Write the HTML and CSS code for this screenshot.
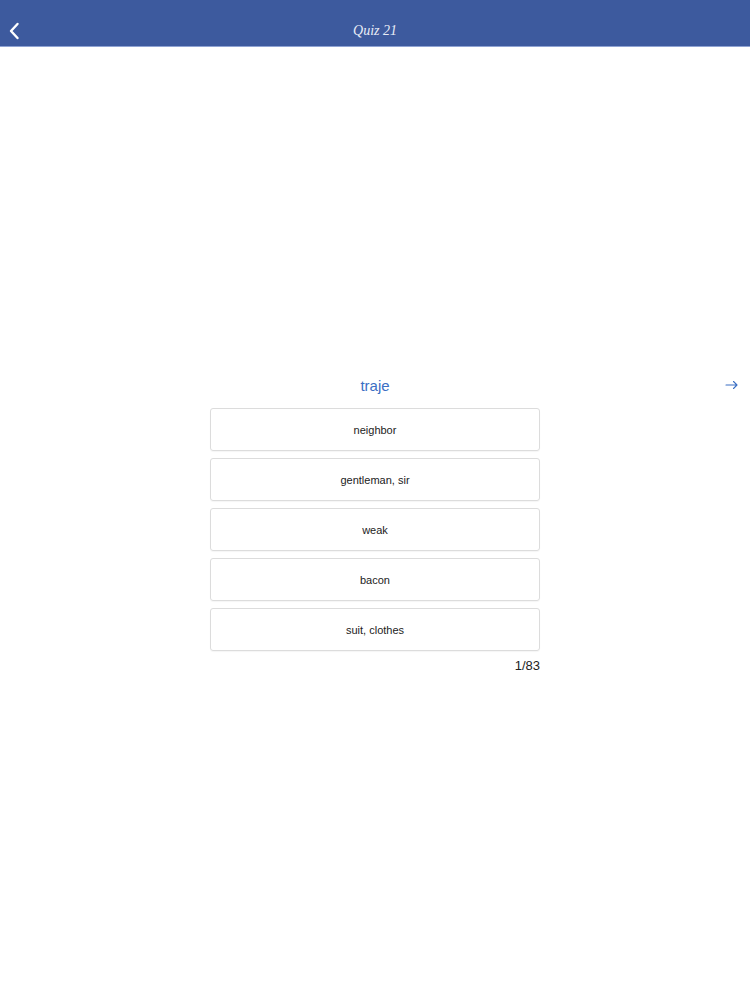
FILE: index.html
```html
<!DOCTYPE html>
<html>
<head>
<meta charset="utf-8">
<link rel="stylesheet" href="styles.css">
</head>
<body>
<header class="navbar">
  <button class="back" aria-label="Back">
    <svg width="12" height="18" viewBox="0 0 12 18"><path d="M9.5 2 L3 9 L9.5 16" fill="none" stroke="#fff" stroke-width="2.4" stroke-linecap="round" stroke-linejoin="round"/></svg>
  </button>
  <div class="title">Quiz 21</div>
</header>
<main class="content">
  <div class="word-row">
    <div class="word">traje</div>
    <svg class="next" width="14" height="10" viewBox="0 0 14 10"><path d="M1 5 H12 M8.5 1.5 L12 5 L8.5 8.5" fill="none" stroke="#3b6fc4" stroke-width="1.1" stroke-linecap="round" stroke-linejoin="round"/></svg>
  </div>
  <div class="options">
    <div class="option">neighbor</div>
    <div class="option">gentleman, sir</div>
    <div class="option">weak</div>
    <div class="option">bacon</div>
    <div class="option">suit, clothes</div>
  </div>
  <div class="counter">1/83</div>
</main>
</body>
</html>
```
FILE: styles.css
```css
html, body { margin: 0; padding: 0; background: #fff; }
body { font-family: "Liberation Sans", Arial, sans-serif; width: 750px; height: 1000px; }
.navbar {
  height: 46px;
  background: #3d5a9e;
  border-bottom: 1px solid #8fa3d3;
  display: flex;
  align-items: center;
  position: relative;
}
.back {
  background: none; border: 0; padding: 0;
  margin-left: 8px; margin-top: 16px;
  display: flex; align-items: center;
}
.title {
  position: absolute; left: 0; right: 0; top: 23px;
  text-align: center;
  font-family: "Liberation Serif", "Times New Roman", serif;
  font-style: italic;
  font-size: 14px;
  color: #e8ecf6;
}
.content {
  padding-top: 328px;
  display: flex; flex-direction: column; align-items: center;
}
.word-row {
  width: 750px; position: relative;
  height: 20px;
  display: flex; justify-content: center; align-items: center;
}
.word { font-size: 15px; color: #3b6fc4; }
.next { position: absolute; right: 11px; top: 5px; }
.options {
  margin-top: 13px;
  width: 330px;
  display: flex; flex-direction: column; gap: 7px;
}
.option {
  height: 41px;
  border: 1px solid #dcdcdc;
  border-radius: 3px;
  box-shadow: 0 1px 1px rgba(0,0,0,0.04);
  display: flex; align-items: center; justify-content: center;
  font-size: 11px; color: #222;
}
.counter {
  width: 330px; text-align: right;
  margin-top: 7px;
  font-size: 13px; color: #222;
}
```
